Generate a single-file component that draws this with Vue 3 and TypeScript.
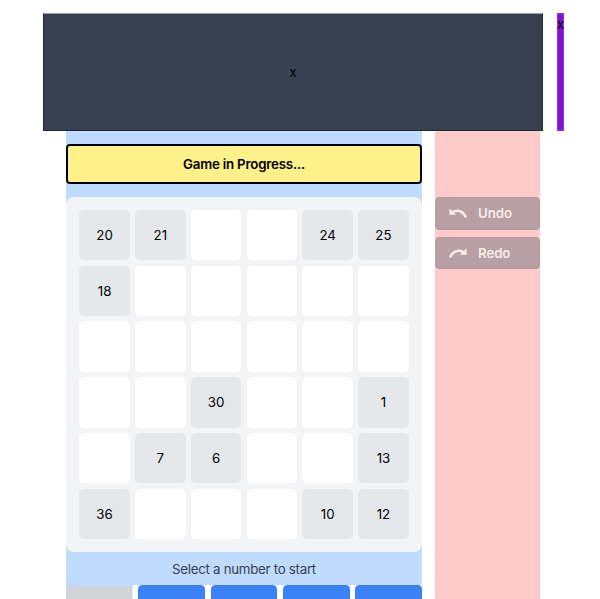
<script setup lang="ts">
const cells: (number | null)[] = [
  20, 21, null, null, 24, 25,
  18, null, null, null, null, null,
  null, null, null, null, null, null,
  null, null, 30, null, null, 1,
  null, 7, 6, null, null, 13,
  36, null, null, null, 10, 12,
]
const choices = [false, true, true, true, true]
</script>

<template>
  <main class="page">
    <header class="top">
      <div class="banner">x</div>
      <div class="side">x</div>
    </header>
    <section class="columns">
      <div class="game">
        <div class="status">Game in Progress...</div>
        <div class="board">
          <div v-for="(n, i) in cells" :key="i" class="cell" :class="{ filled: n !== null }">{{ n }}</div>
        </div>
        <p class="hint">Select a number to start</p>
        <div class="choices">
          <div v-for="(on, i) in choices" :key="i" class="choice" :class="{ on }"></div>
        </div>
      </div>
      <aside class="tools">
        <button class="tool">
          <svg viewBox="0 0 18 10" width="18" height="10" fill="none">
            <path d="M0.4 0.2 V6.8 H7 Z" fill="currentColor" />
            <path d="M2.6 4.8 C7 1.4 13.4 1.6 17 9.4" stroke="currentColor" stroke-width="2.6" />
          </svg>
          Undo
        </button>
        <button class="tool">
          <svg viewBox="0 0 18 10" width="18" height="10" fill="none">
            <path d="M17.6 0.2 V6.8 H11 Z" fill="currentColor" />
            <path d="M15.4 4.8 C11 1.4 4.6 1.6 1 9.4" stroke="currentColor" stroke-width="2.6" />
          </svg>
          Redo
        </button>
      </aside>
    </section>
  </main>
</template>

<style scoped>
.page {
  height: 599px;
  overflow: hidden;
  font-family: Inter, "Liberation Sans", sans-serif;
  color: #000;
  background: #fff;
}
.top {
  display: flex;
  gap: 14px;
  padding: 13px 0 0 43px;
  font-size: 13px;
}
.banner {
  box-sizing: border-box;
  width: 500px;
  height: 118px;
  display: flex;
  align-items: center;
  justify-content: center;
  background: #374151;
  border: 1px solid #1f2937;
  border-top-color: #9ca3af;
}
.side {
  box-sizing: border-box;
  width: 7px;
  height: 118px;
  display: flex;
  justify-content: center;
  padding-top: 2px;
  background: #7e14d0;
  border: 1px solid #9333ea;
}
.columns {
  display: flex;
  align-items: stretch;
  gap: 13px;
  padding-left: 66px;
}
.game {
  width: 356px;
  height: 520px;
  padding-top: 13px;
  background: #bfdbfe;
}
.status {
  box-sizing: border-box;
  height: 40px;
  display: flex;
  align-items: center;
  justify-content: center;
  background: #fef08a;
  border: 2px solid #000;
  border-radius: 4px;
  font-size: 13.3px;
  font-weight: 600;
  letter-spacing: -0.2px;
}
.board {
  box-sizing: border-box;
  display: grid;
  grid-template-columns: repeat(6, 1fr);
  gap: 5.33px;
  margin-top: 13px;
  padding: 13px 13.33px 13.33px;
  background: #f3f4f6;
  border-radius: 8px;
}
.cell {
  height: 50.4px;
  display: flex;
  align-items: center;
  justify-content: center;
  background: #fff;
  border-radius: 5px;
  font-size: 13.3px;
}
.cell.filled {
  background: #e5e7eb;
}
.hint {
  margin: 0;
  height: 33px;
  display: flex;
  align-items: center;
  justify-content: center;
  font-size: 13.3px;
  letter-spacing: -0.28px;
  color: #374151;
}
.choices {
  display: grid;
  grid-template-columns: repeat(5, 1fr);
  gap: 5.33px;
  height: 40px;
  background: #fff;
}
.choice {
  box-sizing: border-box;
  background: #d1d5db;
  border-top: 1px solid #bfdbfe;
  border-right: 1px solid #e5e7eb;
}
.choice.on {
  background: #3b82f6;
  border: 1px solid #3a7df2;
  border-radius: 4px;
}
.tools {
  width: 105px;
  display: flex;
  flex-direction: column;
  gap: 7px;
  padding-top: 66px;
  background: #fecaca;
}
.tool {
  box-sizing: border-box;
  height: 32.6px;
  display: flex;
  align-items: center;
  gap: 11px;
  padding: 0 0 0 13px;
  background: #b89fa3;
  color: #fbeaea;
  border: 1px solid #b39a9e;
  border-radius: 4px;
  font: 600 13.3px Inter, "Liberation Sans", sans-serif;
  letter-spacing: -0.1px;
}
</style>
